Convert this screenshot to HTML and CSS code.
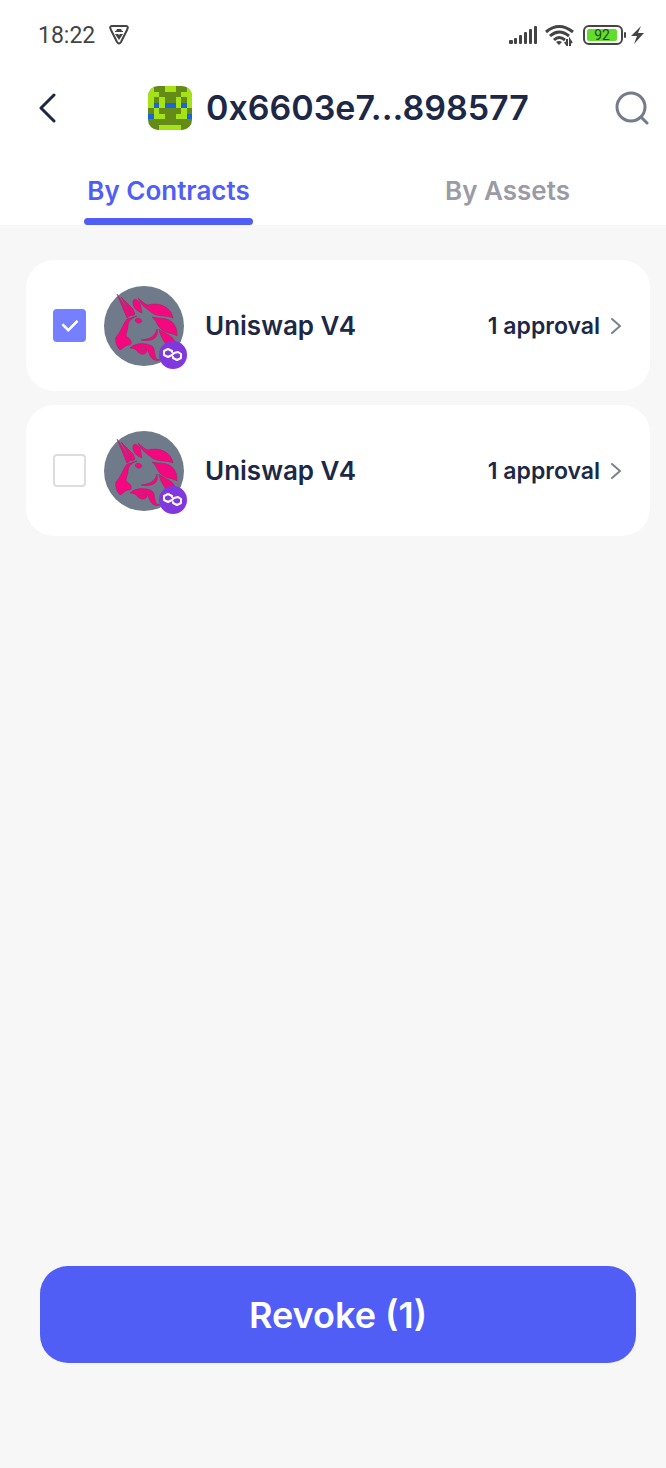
FILE: index.html
```html
<!DOCTYPE html>
<html lang="en">
<head>
    <meta charset="UTF-8">
    <meta name="viewport" content="width=device-width, initial-scale=1.0">
    <title>Approvals</title>
    <link rel="stylesheet" href="styles.css">
</head>
<body>

    <!-- Shared artwork -->
    <svg class="sprite" aria-hidden="true">
        <symbol id="unicorn" viewBox="0 0 80 80">
            <circle cx="40" cy="40" r="40" fill="#6f7b8b"/>
            <g fill="#f5087f" stroke="#a51c63" stroke-width="0.5" stroke-linejoin="round">
                <path d="M13 8L27 29L23 32Z"/>
                <path d="M17 11L29 23L31 28L28 30Z"/>
                <path d="M29 15C30 12 33 13 36 17L38 27C32 25 28 20 29 15Z"/>
                <path d="M34 12C38 15 40 18 44 19C54 16 67 20 69 32C62 29 54 31 48 27C44 23 38 21 34 12Z"/>
                <path d="M48 31C56 33 64 31 69 37C73 42 73 46 73 50C66 46 61 48 56 42C53 39 52 34 48 31Z"/>
                <path d="M55 43C60 48 68 48 71 56L69 65L61 57C58 52 56 49 55 43Z"/>
                <path d="M23 33L33 30C26 33 24 36 24 41C23 47 21 49 23 51C29 54 28 60 24 59C21 60 18 63 16 64C12 60 11 54 12 51C18 44 19 38 23 33Z"/>
                <path d="M31 34C33 31 37 32 38 35C37 38 32 38 31 34Z"/>
                <path d="M53 43C55 52 49 56 37 54C45 53 51 51 53 43Z"/>
                <path d="M26 62C32 56 43 57 48 60C53 64 48 73 56 74C48 76 46 70 44 65C42 61 36 61 36 65C38 62 43 62 43 65C42 69 37 69 34 66C32 63 29 62 26 62Z"/>
            </g>
        </symbol>
        <symbol id="polygon" viewBox="0 0 28 28">
            <circle cx="14" cy="14" r="14" fill="#8038de"/>
            <path d="M13 11V10L9 8L5 10V14L9 16L13 14L15 12L19 11L22 13V17L18 19L14 17V16" fill="none" stroke="#fff" stroke-width="2" stroke-linejoin="round" stroke-linecap="round"/>
        </symbol>
        <symbol id="chevron" viewBox="0 0 10 18">
            <path d="M1 2L9 9L1 16" fill="none" stroke="#7d818c" stroke-width="2" stroke-linecap="round" stroke-linejoin="round"/>
        </symbol>
    </svg>

    <div class="screen">
        <header class="top">
            <div class="status-bar">
                <div class="status-left">
                    <span class="clock">18:22</span>
                    <svg width="20" height="20" viewBox="0 0 20 20">
                        <path d="M3 1H17Q20 1 18 5L12 17Q10 20 8 17L2 5Q0 1 3 1Z" fill="none" stroke="#444" stroke-width="2"/>
                        <path d="M8 4H12L13 6H14V7H6V6H7ZM6 9H9L10 10L11 9H14L10 15Z" fill="#444"/>
                    </svg>
                </div>
                <div class="status-right">
                    <svg width="28" height="18" viewBox="0 0 28 18" fill="#444">
                        <rect x="0" y="14" width="4" height="4" rx="1"/>
                        <rect x="5" y="12" width="3" height="6" rx="1"/>
                        <rect x="10" y="9" width="3" height="9" rx="1"/>
                        <rect x="15" y="6" width="3" height="12" rx="1"/>
                        <rect x="20" y="3" width="3" height="15" rx="1"/>
                        <rect x="25" y="0" width="3" height="18" rx="1"/>
                    </svg>
                    <svg width="30" height="22" viewBox="0 0 30 22">
                        <g fill="none" stroke="#444" stroke-width="3">
                            <path d="M1 8Q14 -3 28 8"/>
                            <path d="M5 12Q14 4 24 12"/>
                            <path d="M9 16Q14 11 20 16"/>
                        </g>
                        <path d="M11 18Q14 16 17 18L14 21Z" fill="#444"/>
                        <path d="M22 15V21L20 18M25 22V16L27 19" fill="none" stroke="#444" stroke-width="2"/>
                    </svg>
                    <div class="battery"><span class="battery-level">92</span></div>
                    <svg width="14" height="18" viewBox="0 0 14 18">
                        <path d="M10 0L0 10H6L3 18L13 7H7Z" fill="#444"/>
                    </svg>
                </div>
            </div>

            <div class="title-bar">
                <button class="icon-btn back" aria-label="Back">
                    <svg width="18" height="30" viewBox="0 0 18 30">
                        <path d="M16 2L3 15L16 28" fill="none" stroke="#1d2847" stroke-width="3" stroke-linecap="round" stroke-linejoin="round"/>
                    </svg>
                </button>
                <div class="account">
                    <svg class="identicon" width="44" height="44" viewBox="0 0 8 8" shape-rendering="crispEdges">
                        <path fill="#648a18" d="M0 0H8V8H0Z"/>
                        <path fill="#a5e317" d="M0 0H1V4H0ZM7 0H8V4H7ZM3 0H5V1H3ZM1 1H2V2H1ZM6 1H7V2H6ZM2 2H3V4H2ZM5 2H6V4H5ZM1 4H2V6H1ZM6 4H7V6H6ZM2 5H3V6H2ZM5 5H6V6H5ZM2 7H6V8H2Z"/>
                        <path fill="#1b66d6" d="M1 3H2V4H1ZM3 3H5V4H3ZM6 3H7V4H6ZM0 5H1V6H0ZM7 5H8V6H7Z"/>
                    </svg>
                    <h1>0x6603e7...898577</h1>
                </div>
                <button class="icon-btn" aria-label="Search">
                    <svg width="34" height="34" viewBox="0 0 34 34" fill="none" stroke="#747b8b" stroke-width="3" stroke-linecap="round">
                        <circle cx="16" cy="16" r="14"/>
                        <path d="M26 26L32 32"/>
                    </svg>
                </button>
            </div>

            <nav class="tabs">
                <a class="tab active" href="#contracts">By Contracts</a>
                <a class="tab" href="#assets">By Assets</a>
            </nav>
        </header>

        <main class="list" id="contracts">
            <div class="card">
                <input class="check" type="checkbox" id="item-1" checked>
                <label class="app" for="item-1">
                    <span class="logo">
                        <svg class="logo-img"><use href="#unicorn"/></svg>
                        <svg class="chain"><use href="#polygon"/></svg>
                    </span>
                    <span>Uniswap V4</span>
                </label>
                <a class="approvals" href="#item-1">1 approval
                    <svg width="10" height="18"><use href="#chevron"/></svg>
                </a>
            </div>
            <div class="card">
                <input class="check" type="checkbox" id="item-2">
                <label class="app" for="item-2">
                    <span class="logo">
                        <svg class="logo-img"><use href="#unicorn"/></svg>
                        <svg class="chain"><use href="#polygon"/></svg>
                    </span>
                    <span>Uniswap V4</span>
                </label>
                <a class="approvals" href="#item-2">1 approval
                    <svg width="10" height="18"><use href="#chevron"/></svg>
                </a>
            </div>
        </main>

        <footer class="bottom">
            <button class="revoke-btn" id="revoke-btn">Revoke (1)</button>
        </footer>
    </div>

    <script>
        const checks = document.querySelectorAll('.check');
        const revokeButton = document.getElementById('revoke-btn');

        // Keep the button count in step with the selection
        checks.forEach(check => {
            check.addEventListener('change', () => {
                const count = document.querySelectorAll('.check:checked').length;
                revokeButton.textContent = `Revoke (${count})`;
                revokeButton.disabled = count === 0;
            });
        });
    </script>

</body>
</html>
```
FILE: styles.css
```css
* {
    box-sizing: border-box;
}
body {
    font-family: Inter, "Liberation Sans", sans-serif;
    margin: 0;
    background-color: #f7f7f7;
    color: #1d2847;
}
button {
    font-family: inherit;
    border: none;
    cursor: pointer;
}
a {
    text-decoration: none;
    color: inherit;
}
svg {
    display: block;
    flex-shrink: 0;
}
.sprite {
    position: absolute;
    width: 0;
    height: 0;
}
.screen {
    min-height: 100vh;
    display: flex;
    flex-direction: column;
}
.top {
    background: white;
}
.status-bar {
    display: flex;
    justify-content: space-between;
    align-items: center;
    height: 70px;
    padding: 0 21px 0 38px;
}
.status-left {
    display: flex;
    align-items: center;
    gap: 14px;
}
.clock {
    font-family: Roboto, sans-serif;
    font-size: 23px;
    color: #444;
}
.status-right {
    display: flex;
    align-items: center;
    gap: 8px;
}
.battery {
    position: relative;
    width: 40px;
    height: 20px;
    padding: 2px;
    border: 2px solid #444;
    border-radius: 6px;
}
.battery::after {
    content: "";
    position: absolute;
    top: 5px;
    right: -5px;
    width: 2px;
    height: 6px;
    border-radius: 1px;
    background: #444;
}
.battery-level {
    display: block;
    width: 30px;
    height: 12px;
    border-radius: 2px;
    background: #62dc2d;
    color: #234a16;
    font-family: Roboto, sans-serif;
    font-size: 14px;
    line-height: 13px;
    text-align: center;
}
.title-bar {
    display: flex;
    justify-content: space-between;
    align-items: center;
    height: 75px;
    padding: 0 17px 0 38px;
}
.icon-btn {
    padding: 0;
    background: none;
}
.back {
    padding-right: 6px;
}
.account {
    display: flex;
    align-items: center;
    gap: 14px;
}
.identicon {
    border-radius: 10px;
}
h1 {
    margin: 0;
    font-size: 34px;
    font-weight: 600;
}
.tabs {
    display: grid;
    grid-template-columns: 1fr 1fr;
    column-gap: 22px;
    justify-items: center;
    height: 80px;
    padding: 18px 0 0 10px;
}
.tab {
    display: flex;
    align-items: center;
    padding: 0 3px;
    border-bottom: 7px solid transparent;
    color: #9a9ba6;
    font-size: 26px;
    font-weight: 600;
}
.tab.active {
    position: relative;
    color: #505ef5;
}
.tab.active::after {
    content: "";
    position: absolute;
    left: 0;
    right: 0;
    bottom: -7px;
    height: 7px;
    border-radius: 4px;
    background: #505ef5;
}
.list {
    flex: 1;
    display: flex;
    flex-direction: column;
    gap: 14px;
    padding: 35px 16px 35px 26px;
}
.card {
    display: flex;
    align-items: center;
    height: 131px;
    padding: 0 29px 0 27px;
    border-radius: 28px;
    background: white;
    font-weight: 600;
}
.check {
    appearance: none;
    display: grid;
    place-items: center;
    width: 33px;
    height: 33px;
    margin: 0;
    border: 2px solid #dddde0;
    border-radius: 4px;
    background: white;
    cursor: pointer;
}
.check:checked {
    border-color: #7480ff;
    background: #7480ff;
}
.check:checked::after {
    content: "";
    width: 7px;
    height: 12px;
    margin-bottom: 4px;
    border: solid white;
    border-width: 0 3px 3px 0;
    border-radius: 1px;
    transform: rotate(45deg);
}
.app {
    flex: 1;
    display: flex;
    align-items: center;
    gap: 21px;
    margin-left: 18px;
    font-size: 26px;
    cursor: pointer;
}
.logo {
    position: relative;
}
.logo-img {
    width: 80px;
    height: 80px;
}
.chain {
    position: absolute;
    right: -3px;
    bottom: -3px;
    width: 28px;
    height: 28px;
}
.approvals {
    display: flex;
    align-items: center;
    gap: 11px;
    font-size: 23px;
}
.bottom {
    padding: 0 30px 105px 40px;
}
.revoke-btn {
    width: 100%;
    height: 97px;
    border-radius: 28px;
    background: #505ef5;
    color: white;
    font-size: 36px;
    font-weight: 600;
}
.revoke-btn:disabled {
    opacity: 0.5;
}
```
